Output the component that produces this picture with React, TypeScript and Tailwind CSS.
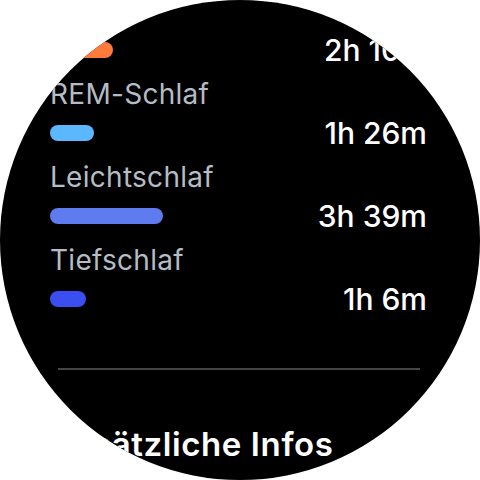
const stages = [
  { label: "Wach", value: "2h 10m", width: "w-[63px]", color: "bg-[#ff7a3b]" },
  { label: "REM-Schlaf", value: "1h 26m", width: "w-[44px]", color: "bg-[#5bb8ff]" },
  { label: "Leichtschlaf", value: "3h 39m", width: "w-[113px]", color: "bg-[#5f7bf0]" },
  { label: "Tiefschlaf", value: "1h 6m", width: "w-[36px]", color: "bg-[#3b4ef2]" },
];

export default function App() {
  return (
    <div className="w-[480px] h-[480px] bg-white">
      <div
        className="w-[480px] h-[480px] rounded-full bg-black overflow-hidden text-white"
        style={{ fontFamily: "Inter, Roboto, sans-serif" }}
      >
        <div className="-mt-[9px] pl-[50px] pr-[53px]">
          {stages.map((s) => (
            <div key={s.label} className="mb-[5px]">
              <div className="text-[28px] leading-[40px] text-[#b4bcc4] tracking-[0.01em]">{s.label}</div>
              <div className="h-[38px] flex items-center justify-between">
                <div className={`h-4 rounded-full ${s.width} ${s.color}`} />
                <div className="text-[30px] leading-[36px] font-medium">{s.value}</div>
              </div>
            </div>
          ))}
          <div className="mt-[50px] ml-[8px] mr-[7px] h-[2px] bg-[#444]" />
          <div className="mt-[56px] text-[33px] leading-[36px] font-semibold tracking-[0.6px] whitespace-nowrap">Zusätzliche Infos</div>
        </div>
      </div>
    </div>
  );
}
